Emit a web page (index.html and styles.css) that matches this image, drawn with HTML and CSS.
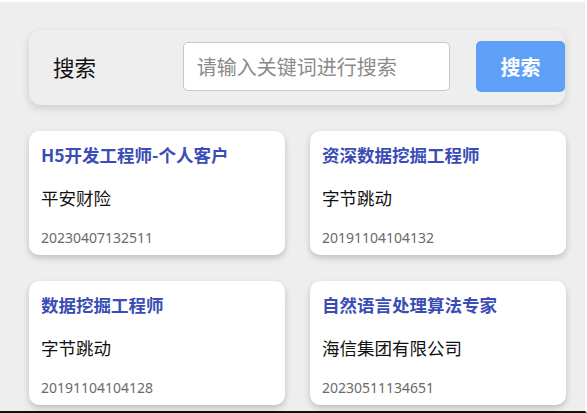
FILE: index.html
```html
<!DOCTYPE html>
<html lang="zh-CN">
<head>
<meta charset="utf-8">
<title>搜索</title>
<link rel="stylesheet" href="styles.css">
</head>
<body>
<div class="page">
  <div class="search-panel">
    <span class="search-label">搜索</span>
    <input class="search-input" type="text" placeholder="请输入关键词进行搜索">
    <button class="search-btn">搜索</button>
  </div>
  <div class="card-grid">
    <div class="card">
      <div class="card-title">H5开发工程师-个人客户</div>
      <div class="card-company">平安财险</div>
      <div class="card-date">20230407132511</div>
    </div>
    <div class="card">
      <div class="card-title">资深数据挖掘工程师</div>
      <div class="card-company">字节跳动</div>
      <div class="card-date">20191104104132</div>
    </div>
    <div class="card">
      <div class="card-title">数据挖掘工程师</div>
      <div class="card-company">字节跳动</div>
      <div class="card-date">20191104104128</div>
    </div>
    <div class="card">
      <div class="card-title">自然语言处理算法专家</div>
      <div class="card-company">海信集团有限公司</div>
      <div class="card-date">20230511134651</div>
    </div>
  </div>
</div>
</body>
</html>
```

FILE: styles.css
```css
html, body {
  margin: 0;
  padding: 0;
  background: #ffffff;
}
body {
  font-family: "Noto Sans", "Noto Sans CJK SC", sans-serif;
}
.page {
  box-sizing: border-box;
  width: 587px;
  height: 413px;
  overflow: hidden;
  background: #eeeeee;
  border-top: 2px solid #ffffff;
  border-right: 2px solid #ffffff;
  border-bottom: 2px solid #111111;
  padding: 28px 0 0 29px;
}
.search-panel {
  box-sizing: border-box;
  width: 536px;
  height: 75px;
  display: flex;
  align-items: center;
  padding-left: 24px;
  padding-bottom: 2px;
  background: #eeeeee;
  border-radius: 12px;
  box-shadow: 0 3px 8px rgba(0, 0, 0, 0.15);
}
.search-label {
  width: 130px;
  font-size: 21.5px;
  color: #111111;
  font-family: "Noto Sans CJK SC", sans-serif;
}
.search-input {
  box-sizing: border-box;
  width: 268px;
  height: 49px;
  margin-right: 26px;
  padding: 0 13px;
  border: 1px solid #c8c8c8;
  border-radius: 5px;
  background: #ffffff;
  font-size: 20px;
  font-family: "Noto Sans CJK SC", sans-serif;
  outline: none;
}
.search-input::placeholder {
  color: #8a8a8a;
}
.search-btn {
  width: 89px;
  height: 51px;
  border: none;
  border-radius: 5px;
  background: #5ea0f8;
  color: #ffffff;
  font-size: 20px;
  font-weight: bold;
  font-family: "Noto Sans CJK SC", sans-serif;
  padding: 0;
}
.card-grid {
  display: grid;
  grid-template-columns: 256px 256px;
  column-gap: 25px;
  row-gap: 26px;
  margin-top: 26px;
}
.card {
  box-sizing: border-box;
  height: 124px;
  background: #ffffff;
  border-radius: 10px;
  box-shadow: 0 3px 6px rgba(0, 0, 0, 0.2);
  padding: 12px 12px 0 12px;
}
.card-title {
  font-family: "Noto Sans CJK SC", sans-serif;
  font-size: 17.5px;
  line-height: 24px;
  font-weight: bold;
  color: #3a4db6;
}
.card-company {
  font-family: "Noto Sans CJK SC", sans-serif;
  font-size: 17.5px;
  line-height: 24px;
  color: #111111;
  margin-top: 19px;
}
.card-date {
  font-family: "Noto Sans", sans-serif;
  font-size: 14px;
  line-height: 20px;
  color: #6a6a6a;
  margin-top: 18px;
}
```
